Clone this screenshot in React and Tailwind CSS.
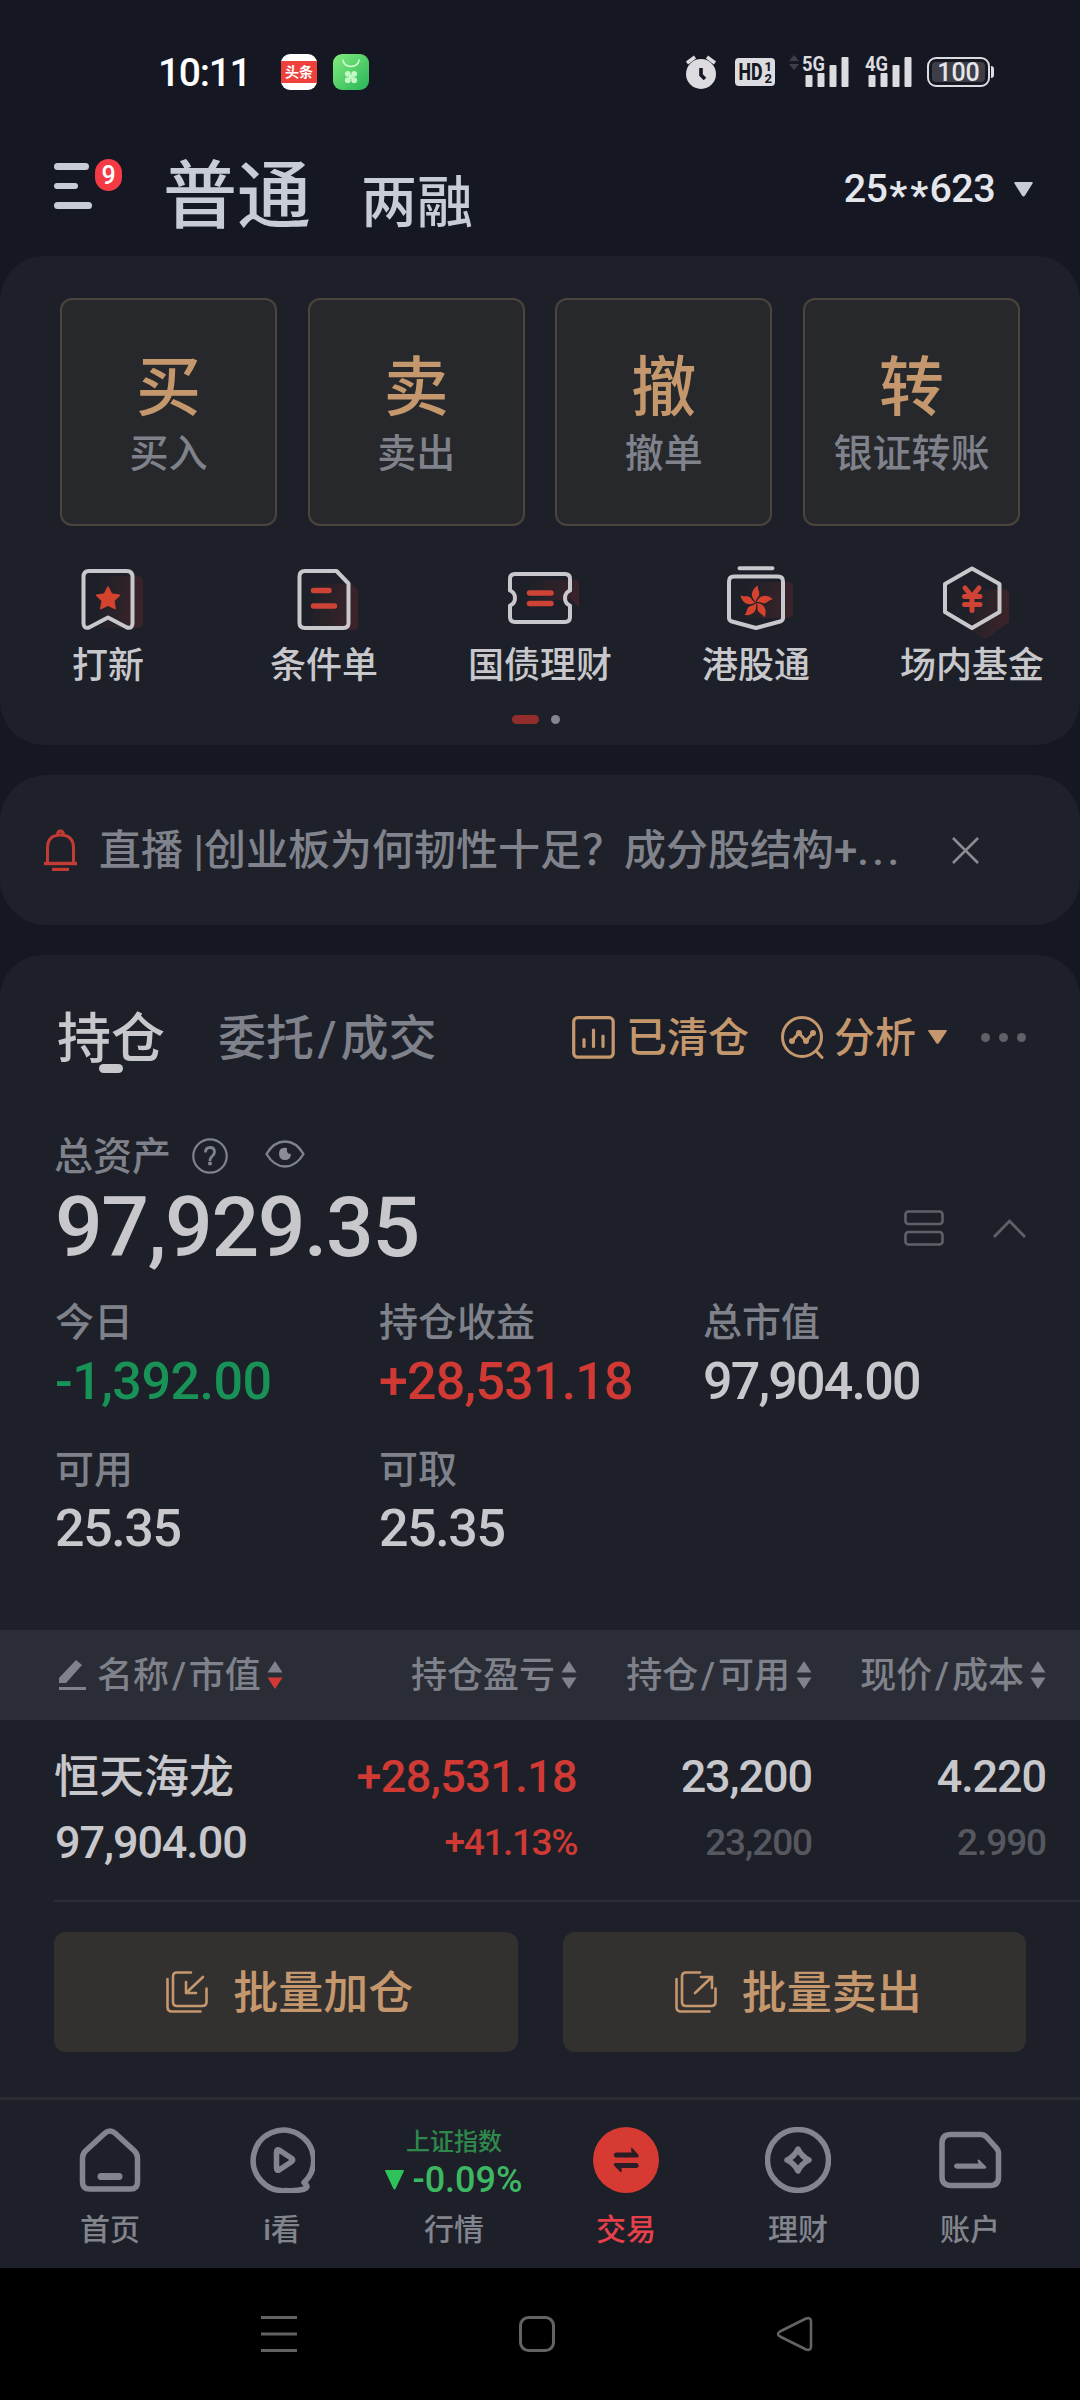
// src/App.jsx
import { useState } from "react";

const trades = [
  { mark: "买", label: "买入" },
  { mark: "卖", label: "卖出" },
  { mark: "撤", label: "撤单" },
  { mark: "转", label: "银证转账" },
];

const shortcuts = [
  { label: "打新", icon: <NewStockIcon /> },
  { label: "条件单", icon: <ConditionIcon /> },
  { label: "国债理财", icon: <BondIcon /> },
  { label: "港股通", icon: <HongKongIcon /> },
  { label: "场内基金", icon: <FundIcon /> },
];

const stats = [
  { label: "今日", value: "-1,392.00", color: "text-[#189257] tracking-[-0.5px]" },
  { label: "持仓收益", value: "+28,531.18", color: "text-[#d13a34] tracking-[-0.8px]" },
  { label: "总市值", value: "97,904.00", color: "text-[#c8c8cc] tracking-[-1.8px]" },
  { label: "可用", value: "25.35", color: "text-[#c8c8cc] tracking-[-1.4px]" },
  { label: "可取", value: "25.35", color: "text-[#c8c8cc] tracking-[-1.4px]" },
];

// ---------- status bar ----------

function Signal({ name }) {
  return (
    <svg className="overflow-visible" width="48" height="36" viewBox="0 0 48 36" fill="#dcdce0">
      <text x="0" y="17" fontSize="21" fontWeight="700" textLength="23" lengthAdjust="spacingAndGlyphs">
        {name}
      </text>
      <rect x="3.5" y="21" width="7" height="12" rx="1" />
      <rect x="15.5" y="19" width="7" height="14" rx="1" />
      <rect x="27.5" y="11" width="7" height="22" rx="1" />
      <rect x="39.5" y="3" width="7" height="30" rx="1" />
    </svg>
  );
}

function StatusBar() {
  return (
    <div className="flex h-36 items-center pr-[86px] pl-[158px]">
      <span className="mt-0.5 w-[92px] text-[39px] tracking-[-1.3px] text-white">10:11</span>
      <div className="ml-[31px] flex h-9 w-9 flex-col justify-center overflow-hidden rounded-[9px] bg-white">
        <div className="flex h-[22px] items-center justify-center bg-[#ee413c] text-[14px] font-bold text-white">
          头条
        </div>
      </div>
      <svg className="ml-4" width="36" height="36" viewBox="0 0 36 36">
        <defs>
          <linearGradient id="mall" x1="0" y1="0" x2="1" y2="1">
            <stop offset="0" stopColor="#83ee7d" />
            <stop offset="1" stopColor="#27b35a" />
          </linearGradient>
        </defs>
        <rect width="36" height="36" rx="9" fill="url(#mall)" />
        <path d="M10 6a8 6.500 0 0 0 16 0" fill="none" stroke="#d6ffd6" strokeWidth="1.500" strokeLinecap="round" />
        <g fill="#c6f8c6">
          <circle cx="14.8" cy="19.8" r="2.900" />
          <circle cx="21.2" cy="19.8" r="2.900" />
          <circle cx="14.8" cy="26.2" r="2.900" />
          <circle cx="21.2" cy="26.2" r="2.900" />
          <rect x="16" y="21" width="4" height="4" />
        </g>
      </svg>

      <div className="ml-auto flex items-center">
        <svg width="34" height="36" viewBox="0 0 34 36">
          <circle cx="17" cy="20" r="15" fill="#dcdce0" />
          <path d="M3 9l8-6M31 9l-8-6" stroke="#dcdce0" strokeWidth="3.6" />
          <path d="M17 14v7l4 4" fill="none" stroke="#151722" strokeWidth="3.6" />
        </svg>
        <svg className="ml-[17px]" width="40" height="28" viewBox="0 0 40 28">
          <rect width="40" height="28" rx="4" fill="#dcdce0" />
          <g fill="#151722" fontWeight="800">
            <text x="3.500" y="22" fontSize="23" textLength="24" lengthAdjust="spacingAndGlyphs">
              HD
            </text>
            <text x="29.500" y="13" fontSize="13">
              1
            </text>
            <text x="29.500" y="25" fontSize="13">
              2
            </text>
          </g>
        </svg>
        <svg className="ml-3.5 mb-[19px]" width="10" height="15" viewBox="0 0 10 15" fill="#3d3e48">
          <path d="M5 0l5 6H0zM5 15l5-6H0z" />
        </svg>
        <span className="ml-[3px]">
          <Signal name="5G" />
        </span>
        <span className="ml-[15px]">
          <Signal name="4G" />
        </span>
        <div className="ml-3.5 flex h-[30px] w-[63px] items-center rounded-[9px] border-2 border-[#dcdce0] p-[3px]">
          <div className="flex h-full w-full items-center justify-center rounded-[4px] bg-[#3d3e47] text-[25px] leading-none text-[#e6e6ea]">
            100
          </div>
        </div>
        <div className="ml-px h-3 w-[3px] rounded-r bg-[#dcdce0]" />
      </div>
    </div>
  );
}

// ---------- header ----------

function Header({ mode, setMode }) {
  return (
    <header className="flex h-28 items-start pl-[54px] text-[#c7ccd6]">
      <div className="relative mt-[19px] flex flex-col gap-[13px]">
        <i className="h-[6.5px] w-[34.5px] rounded-full bg-[#c7ccd6]" />
        <i className="h-[6.5px] w-6 rounded-full bg-[#c7ccd6]" />
        <i className="h-[6.5px] w-[38px] rounded-full bg-[#c7ccd6]" />
        <span className="absolute -top-1 left-[41px] flex h-8 w-[27px] items-center justify-center rounded-full bg-[#f43a44] text-[25px] text-white">
          9
        </span>
      </div>
      <div className="mt-[3px] ml-[71px] flex items-baseline">
        <button className="text-[74px] leading-[100px]" onClick={() => setMode("普通")}>
          普通
        </button>
        <button className="ml-[50px] text-[56px] leading-none" onClick={() => setMode("两融")}>
          两融
        </button>
      </div>
      <div className="mt-[35px] mr-[47px] ml-auto flex h-5 items-center text-[39.5px] text-[#e4e6ec]">
        <span className="flex leading-none tracking-[-0.6px]">
          25
          <span className="flex w-[42px] translate-y-[7px] justify-around">
            <b className="font-bold">*</b>
            <b className="font-bold">*</b>
          </span>
          623
        </span>
        <svg className="ml-[19px]" width="19" height="15" viewBox="0 0 19 15" fill="#c7ccd6">
          <path d="M1.5 0h16q2 0 1 1.6l-7.500 12q-1.500 1.800-3 0l-7.500-12q-1-1.600 1-1.600z" />
        </svg>
      </div>
    </header>
  );
}

// ---------- shortcut icons, all on an 80x80 grid ----------

function IconBase({ children }) {
  return (
    <svg width="80" height="80" viewBox="0 0 80 80" fill="none" strokeLinecap="round" strokeLinejoin="round">
      <defs>
        <linearGradient id="glow" x1="0" y1="0" x2="1" y2="0.2">
          <stop offset="0" stopColor="#b03030" stopOpacity="0" />
          <stop offset="1" stopColor="#b03030" stopOpacity="0.2" />
        </linearGradient>
      </defs>
      {children}
    </svg>
  );
}

function NewStockIcon() {
  return (
    <IconBase>
      <path d="M30 16h39q6 0 6 6v40q0 6-6 6H30z" fill="url(#glow)" />
      <path
        d="M21 11h37.500q6 0 6 6v46q0 6-5.500 4.500L40 57.500 21 67.500q-5.500 1.500-5.500-4.500V17q0-6 5.500-6z"
        stroke="#c8c8cc"
        strokeWidth="4"
      />
      <path
        d="M40 27l3.600 7 7.900 1.200-5.700 5.600 1.300 7.900-7.100-3.700-7.100 3.700 1.300-7.900-5.700-5.600 7.900-1.200z"
        fill="#d5432f"
        stroke="#d5432f"
        strokeWidth="1.500"
      />
    </IconBase>
  );
}

function ConditionIcon() {
  return (
    <IconBase>
      <path d="M28 24h40l6 6v36q0 4-4 4H28z" fill="url(#glow)" />
      <path
        d="M21 11h31.500l12 12.500V63q0 5-5 5H21q-5.500 0-5.500-5V16.500q0-5.500 5.500-5.500z"
        stroke="#c8c8cc"
        strokeWidth="4"
      />
      <path d="M29.500 30.500h15.500M29.500 46h21" stroke="#cf4336" strokeWidth="5.500" />
    </IconBase>
  );
}

function BondIcon() {
  return (
    <IconBase>
      <path d="M30 20h45q4 0 4 4v23l-9-9-3 2H30z" fill="url(#glow)" />
      <path
        d="M15 14h50q5 0 5 5v11.500q-5 2-5 7.500t5 7.500V57q0 5-5 5H15q-5 0-5-5V45.500q5-2 5-7.500t-5-7.500V19q0-5 5-5z"
        stroke="#c8c8cc"
        strokeWidth="4"
      />
      <path d="M29.500 33h21.500M29.500 43.500h21.500" stroke="#cf4336" strokeWidth="5.500" />
    </IconBase>
  );
}

function HongKongIcon() {
  return (
    <IconBase>
      <path d="M30 22h41q6 0 6 6v24q0 6-6 6H30z" fill="url(#glow)" />
      <path
        d="M23.500 8.200h33M18 16.500h44q5 0 5 5V58q0 2.500-3 3.500L40 68 16 61.500q-3-1-3-3.500V21.500q0-5 5-5z"
        stroke="#c8c8cc"
        strokeWidth="4"
      />
      <g fill="#d5432f">
        {[0, 72, 144, 216, 288].map((deg) => (
          <path key={deg} transform={`rotate(${deg} 40 42.500)`} d="M40 42C34.500 38 34 30 42 25.500 41 29.500 45 32.500 42.500 36.500 41 38.500 40 39.500 40 42z" />
        ))}
      </g>
    </IconBase>
  );
}

function FundIcon() {
  return (
    <IconBase>
      <path d="M50 30l24-1 3 3v30L55 78q-3 2-6 0L33 66z" fill="url(#glow)" />
      <path d="M40 8.500 67.500 24v28L40 68 13 52V24z" stroke="#c8c8cc" strokeWidth="4" />
      <path d="M33 28l7 8.500 7-8.500M32.500 36.500h15.500M32.500 44.500h15.500M40 36.500v14" stroke="#cf4336" strokeWidth="5" />
    </IconBase>
  );
}

// up/down sort marks of the table head
function Sort({ active }) {
  return (
    <svg className="ml-[6px] shrink-0" width="16" height="28" viewBox="0 0 16 28">
      <path d="M8 0l7.500 11.500H.5z" fill="#7f818c" />
      <path d="M8 28l7.500-11.500H.5z" fill={active ? "#d13a34" : "#7f818c"} />
    </svg>
  );
}

function Slash() {
  return <span className="px-[0.08em]">/</span>;
}

// ---------- bottom tabs ----------

const tabs = [
  {
    label: "首页",
    icon: (
      <>
        <path d="M8.500 24 27.500 6.500q5.500-5 11 0L57.500 24q3 3 3 7v24q0 7-7 7h-41q-7 0-7-7V31q0-4 3-7z" />
        <path d="M24 49.500h18" strokeWidth="7" />
      </>
    ),
  },
  {
    label: "i看",
    icon: (
      <>
        <path d="M55 55.500A30.200 30.200 0 1 0 37 63.500q9 1 18.500-1.500 4-1.500 1.500-4.500z" />
        <path d="M27.500 25q0-3.500 3-1.800l12 8q2.500 1.800 0 3.600l-12 8q-3 1.700-3-1.800z" />
      </>
    ),
  },
  { label: "行情" },
  {
    label: "交易",
    icon: (
      <>
        <circle cx="33" cy="33" r="33" fill="#d63a33" stroke="none" />
        <path
          d="M23 25.500h15.500l-.5-4q.5-1.200 1.500-.3l6 6.800q.8 2.500-1.500 2.500H23q-2.300-.5-2.300-2.500T23 25.500zM43.500 41H28.500l.2 3.500q-.5 1.200-1.500.3l-6.200-6.300q-.8-2.500 1.500-2.500h21q2.300.5 2.300 2.500T43.500 41z"
          fill="#2b1d25"
          stroke="none"
        />
      </>
    ),
  },
  {
    label: "理财",
    icon: (
      <>
        <circle cx="33" cy="33" r="30.500" />
        <path d="M33 22q3.500 7.500 11 11Q36.500 36.500 33 44 29.500 36.500 22 33 29.500 29.500 33 22z" />
      </>
    ),
  },
  {
    label: "账户",
    icon: (
      <>
        <path d="M14 7.500h30q3 0 5.500 2.500l9 10q3 3 3 6V50q0 8.500-8.500 8.500H14Q5 58.500 5 50V16q0-8.500 9-8.500z" />
        <path
          d="M19.500 36.500h22l-1-3q.5-1.500 2-.5l6.500 6.500q1 2.200-1.500 2.200h-28q-2.500-.2-2.500-2.600t2.500-2.600z"
          fill="#82848e"
          stroke="none"
        />
      </>
    ),
  },
];

function TabBar({ tab, setTab }) {
  return (
    <nav className="flex h-[171px] border-t-[3px] border-[#2a2c34] bg-[#1e2029] px-6">
      {tabs.map((t) => (
        <button
          key={t.label}
          onClick={() => setTab(t.label)}
          className={`flex w-[172px] flex-col items-center pt-[27px] text-[30px] ${
            tab === t.label ? "text-[#e8404a]" : "text-[#82848e]"
          }`}
        >
          {t.icon ? (
            <svg
              width="66"
              height="66"
              viewBox="0 0 66 66"
              fill="none"
              stroke="#82848e"
              strokeWidth="5.500"
              strokeLinecap="round"
              strokeLinejoin="round"
            >
              {t.icon}
            </svg>
          ) : (
            <div className="flex h-[66px] flex-col items-center leading-none">
              <span className="mt-[3px] text-[24px] text-[#2e8a4c]">上证指数</span>
              <span className="mt-3.5 flex h-6 items-center text-[36px] text-[#3db862]">
                <svg className="mr-2" width="19" height="20" viewBox="0 0 19 20" fill="#2fc25b">
                  <path d="M1 0h17q1.500 0 .7 1.600l-8 17q-1.200 2-2.400 0l-8-17Q-.500 0 1 0z" />
                </svg>
                -0.09%
              </span>
            </div>
          )}
          <span className="mt-[21px] leading-[32px]">{t.label}</span>
        </button>
      ))}
    </nav>
  );
}

function App() {
  const [mode, setMode] = useState("普通");
  const [tab, setTab] = useState("交易");
  const [showNotice, setShowNotice] = useState(true);

  return (
    <div className="flex h-[2400px] w-[1080px] flex-col overflow-hidden bg-[#151722] font-['Roboto','Noto_Sans_CJK_SC',sans-serif] leading-none font-medium whitespace-nowrap">
      <StatusBar />
      <Header mode={mode} setMode={setMode} />

      {/* Trade actions */}
      <section className="h-[489px] rounded-[44px] bg-[#1d2028] pt-[42px]">
        <div className="grid grid-cols-4 gap-[30.5px] px-[60px]">
          {trades.map((t) => (
            <button
              key={t.label}
              className="flex h-[228px] flex-col items-center rounded-xl border-2 border-[#4e443e] bg-[#27282c] pt-[56px]"
            >
              <span className="text-[65px] text-[#c5976d]">{t.mark}</span>
              <span className="mt-3.5 text-[39px] text-[#7f828b]">{t.label}</span>
            </button>
          ))}
        </div>
        <div className="mt-[34px] grid grid-cols-5">
          {shortcuts.map((s) => (
            <button key={s.label} className="flex flex-col items-center">
              {s.icon}
              <span className="mt-[8px] text-[36px] text-[#c8c8cc]">{s.label}</span>
            </button>
          ))}
        </div>
        <div className="mt-[31px] flex justify-center gap-3 pr-2">
          <i className="h-[9px] w-[27px] rounded-full bg-[#922d2b]" />
          <i className="h-[9px] w-[9px] rounded-full bg-[#85858f]" />
        </div>
      </section>

      {/* Notice */}
      {showNotice && (
        <section className="mt-[30px] flex h-[150px] items-center rounded-[46px] bg-[#1e2129] pl-11">
          <svg width="33" height="42" viewBox="0 0 33 42" fill="none" stroke="#c23b35" strokeWidth="3">
            <path d="M3.500 34V19q0-13 13-13t13 13v15" />
            <path d="M13.500 6q0-4 3-4t3 4" />
            <path d="M0 34.500h33M8 40.500h17" strokeWidth="3.500" />
          </svg>
          <span className="mt-0.5 ml-[22px] w-[822px] text-[42px] text-[#80838b]">
            直播 |创业板为何韧性十足？成分股结构+<span className="tracking-[3.500px]">...</span>
          </span>
          <button className="ml-[31px]" onClick={() => setShowNotice(false)}>
            <svg width="27" height="27" viewBox="0 0 27 27" stroke="#8b8d95" strokeWidth="2.500">
              <path d="M1 1l25 25M26 1 1 26" />
            </svg>
          </button>
        </section>
      )}

      {/* Holdings */}
      <section className="mt-[30px] flex-1 rounded-t-[42px] bg-[#1d2028] pt-[50px]">
        <div className="flex h-16 items-center pr-[54px] pl-[57px] text-[41px] text-[#c5976d]">
          <div className="relative mt-1.5 text-[54px] text-[#c8c8cc]">
            持仓
            <i className="absolute -bottom-[6px] left-[42px] h-[9px] w-6 rounded-full bg-[#c8c8cc]" />
          </div>
          <div className="mt-1 ml-[53px] text-[48px] text-[#7f828b]">
            委托
            <Slash />
            成交
          </div>
          <svg
            className="ml-auto"
            width="43"
            height="43"
            viewBox="0 0 43 43"
            fill="none"
            stroke="#c5976d"
            strokeWidth="3.200"
            strokeLinecap="round"
          >
            <rect x="1.700" y="1.700" width="39.500" height="39.500" rx="4" />
            <path d="M12 23.500v7M21.500 14v16.500M31 20v10.500" />
          </svg>
          <span className="mt-[3px] ml-[11px]">已清仓</span>
          <svg
            className="ml-[32px]"
            width="43"
            height="43"
            viewBox="0 0 43 43"
            fill="none"
            stroke="#c5976d"
            strokeWidth="3"
            strokeLinecap="round"
            strokeLinejoin="round"
          >
            <circle cx="21" cy="21" r="19.500" />
            <path d="M36 36l5 5.500M11 25l7-8 7 8 7-8" />
            <g fill="#c5976d" stroke="none">
              <circle cx="11" cy="25" r="3" />
              <circle cx="18" cy="17" r="3" />
              <circle cx="25" cy="25" r="3" />
              <circle cx="32" cy="17" r="3" />
            </g>
          </svg>
          <span className="mt-[3px] ml-2.5">分析</span>
          <svg className="ml-[12px]" width="19" height="14" viewBox="0 0 19 14" fill="#c5976d">
            <path d="M1 0h17q1.500 0 .7 1.200l-8 12q-1.200 1.300-2.400 0l-8-12Q-.500 0 1 0z" />
          </svg>
          <div className="ml-[34px] flex gap-[9px]">
            <i className="h-[9px] w-[9px] rounded-full bg-[#5f6169]" />
            <i className="h-[9px] w-[9px] rounded-full bg-[#5f6169]" />
            <i className="h-[9px] w-[9px] rounded-full bg-[#5f6169]" />
          </div>
        </div>

        <div className="mt-[67px] flex h-10 items-center pl-[54px] text-[39px] text-[#7f828b]">
          <span className="mt-0.5">总资产</span>
          <svg className="ml-[21px]" width="36" height="36" viewBox="0 0 36 36" fill="none" stroke="#7f828b" strokeWidth="2.200">
            <circle cx="18" cy="18" r="16.700" />
            <path d="M13.500 14.500q0-5 4.500-5t4.500 4.500q0 2-2.200 4-2.300 2-2.300 5" strokeWidth="2.800" />
            <circle cx="18" cy="25.500" r="1" />
          </svg>
          <svg className="mb-1 ml-[37px]" width="40" height="28" viewBox="0 0 40 28" fill="none" stroke="#7f828b" strokeWidth="2.400">
            <path d="M1.500 14Q9 1.500 20 1.500T38.500 14Q31 26.500 20 26.500T1.500 14z" strokeLinejoin="round" />
            <path d="M22 8q-8-1.500-8 6 .5 6 6 6t6-6q-5 0-4-6z" fill="#8a8c98" stroke="none" />
          </svg>
        </div>

        <div className="mt-[10px] flex h-[84px] items-center pl-[55px]">
          <span className="text-[84px] tracking-[-1.4px] text-[#c8c8cc]">97,929.35</span>
          <svg className="ml-auto" width="40" height="36" viewBox="0 0 40 36" fill="none" stroke="#5f6169" strokeWidth="2.600">
            <rect x="1.500" y="1.500" width="37" height="12.500" rx="3" />
            <rect x="1.500" y="22" width="37" height="12.500" rx="3" />
          </svg>
          <svg className="mr-[54px] ml-[49px]" width="33" height="19" viewBox="0 0 33 19" fill="none" stroke="#5f6169" strokeWidth="2.800">
            <path d="M1 18 16.500 2 32 18" />
          </svg>
        </div>

        <div className="mt-[34px] grid grid-cols-[324px_324px_1fr] gap-y-[45px] pl-[55px]">
          {stats.map((s) => (
            <div key={s.label} className="flex flex-col">
              <span className="h-10 text-[39px] text-[#7f828b]">{s.label}</span>
              <span className={`mt-[12px] h-[50px] text-[52px] ${s.color}`}>{s.value}</span>
            </div>
          ))}
        </div>

        {/* Table */}
        <div className="mt-[77px] grid h-[90px] grid-cols-[284px_293px_235px_234px] items-center bg-[#2b2d36] text-[36px] text-[#7f828b]">
          <div className="flex items-center pl-[57px]">
            <svg className="mr-[11px]" width="29" height="30" viewBox="0 0 29 30" fill="#7f828b">
              <path d="M19 0l6 5L9 23H2v-5z" />
              <rect x="2" y="27" width="27" height="3" />
            </svg>
            <span className="mt-0.5">
              名称
              <Slash />
              市值
            </span>
            <Sort active />
          </div>
          <div className="flex items-center justify-end">
            <span className="mt-0.5">持仓盈亏</span>
            <Sort />
          </div>
          <div className="flex items-center justify-end">
            <span className="mt-0.5">
              持仓
              <Slash />
              可用
            </span>
            <Sort />
          </div>
          <div className="flex items-center justify-end">
            <span className="mt-0.5">
              现价
              <Slash />
              成本
            </span>
            <Sort />
          </div>
        </div>
        <div className="grid h-[180px] grid-cols-[284px_293px_235px_234px] grid-rows-[66px_66px] pt-[23px] text-right text-[45px] tracking-[-1.1px] text-[#c8c8cc]">
          <span className="mt-0.5 self-center pl-[54px] text-left tracking-normal">恒天海龙</span>
          <span className="self-center tracking-[-0.6px] text-[#d13a34]">+28,531.18</span>
          <span className="self-center">23,200</span>
          <span className="self-center">4.220</span>
          <span className="self-center pl-[55px] text-left">97,904.00</span>
          <span className="self-center text-[37px] tracking-[-1.4px] text-[#d13a34]">+41.13%</span>
          <span className="self-center text-[37px] text-[#565860]">23,200</span>
          <span className="self-center text-[37px] text-[#565860]">2.990</span>
        </div>
        <div className="ml-[54px] h-[2px] bg-[#2b2d36]" />

        <div className="mt-[30px] grid grid-cols-2 gap-[45px] px-[54px] text-[45px] text-[#c5976d]">
          <button className="flex h-[120px] items-center justify-center rounded-xl bg-[#333030] pl-2">
            <BatchIcon arrow="M37 6 20 22M20 11v11h10" />
            <span className="mt-0.5">批量加仓</span>
          </button>
          <button className="flex h-[120px] items-center justify-center rounded-xl bg-[#333030] pl-2">
            <BatchIcon arrow="M20 22 37 6M26 6h11v11" />
            <span className="mt-0.5">批量卖出</span>
          </button>
        </div>
      </section>

      <TabBar tab={tab} setTab={setTab} />

      {/* System keys */}
      <div className="flex h-[132px] items-center bg-black pl-[261px]">
        <svg width="552" height="36" viewBox="0 0 552 36" fill="none" stroke="#636363" strokeWidth="3">
          <path d="M0 1.500h36M0 18h36M0 34.500h36" />
          <rect x="259.500" y="1.500" width="33" height="33" rx="8" />
          <path d="M545 2.500 519 15.500q-4 2.500 0 5L545 33.500q5 1.500 5-3V5.500q0-4.500-5-3z" strokeWidth="2.600" />
        </svg>
      </div>
    </div>
  );
}

function BatchIcon({ arrow }) {
  return (
    <svg
      className="mr-[25px]"
      width="42"
      height="42"
      viewBox="0 0 42 42"
      fill="none"
      stroke="#c5976d"
      strokeWidth="2.600"
      strokeLinecap="round"
      strokeLinejoin="round"
    >
      <path d="M25 1.500H11q-4 0-4 4V31q0 4 4 4h25q4.500 0 4.500-4V17.500" />
      <path d="M1.500 8v28q0 4.500 4.500 4.500h28.500" />
      <path d={arrow} />
    </svg>
  );
}

export default App;
